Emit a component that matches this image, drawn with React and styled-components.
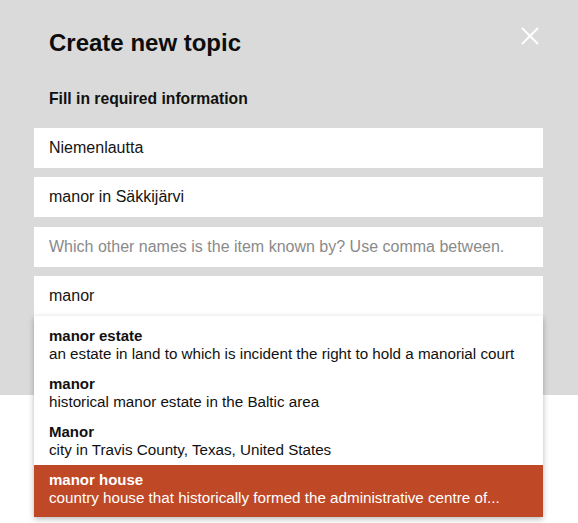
import React from "react";
import styled, { createGlobalStyle } from "styled-components";

const Global = createGlobalStyle`
  html, body { margin: 0; padding: 0; background: #ffffff; }
  body { font-family: "Liberation Sans", Arial, sans-serif; color: #111; }
  * { box-sizing: border-box; }
`;

const Page = styled.main`
  min-height: 100vh;
  background: #fff;
`;

const Panel = styled.section`
  background: #dadada;
  padding: 29px 35px 79px 34px;
  display: flex;
  flex-direction: column;
`;

const Header = styled.header`
  display: flex;
  justify-content: space-between;
  align-items: flex-start;
  padding-left: 15px;
`;

const Title = styled.h1`
  margin: 0;
  font-size: 24px;
  line-height: 28px;
  font-weight: 700;
  color: #0d0d0d;
`;

const Close = styled.button`
  border: 0;
  background: none;
  padding: 0;
  margin: -2px 4px 0 0;
  width: 18px;
  height: 18px;
  display: flex;
  cursor: pointer;
`;

const Subtitle = styled.h2`
  margin: 33px 0 20px;
  padding-left: 15px;
  font-size: 15.7px;
  line-height: 18px;
  font-weight: 700;
  color: #111;
`;

const Fields = styled.div`
  display: flex;
  flex-direction: column;
  gap: 9px;
`;

const Field = styled.div`
  position: relative;
  margin-top: ${(p) => (p.$extra ? "1px" : "0")};
`;

const Input = styled.input`
  display: block;
  width: 100%;
  height: 40px;
  border: 0;
  outline: none;
  background: #fff;
  padding: 0 15px;
  font-family: "Liberation Sans", Arial, sans-serif;
  font-size: 16px;
  color: #141414;
  &::placeholder { color: #8a8a8a; opacity: 1; }
`;

const Menu = styled.ul`
  position: absolute;
  top: 100%;
  left: 0;
  right: 0;
  margin: 0;
  padding: 5px 0 0;
  list-style: none;
  background: #fff;
  box-shadow: 0 2px 6px rgba(0, 0, 0, 0.28);
  z-index: 5;
`;

const Item = styled.li`
  padding: 6px 15px ${(p) => (p.$last ? "10px" : "6px")};
  background: ${(p) => (p.$active ? "#bf4826" : "transparent")};
  color: ${(p) => (p.$active ? "#fff" : "#111")};
  font-size: 15.2px;
  line-height: 18px;
  white-space: nowrap;
  overflow: hidden;
`;

const ItemTitle = styled.div`
  font-weight: 700;
  font-size: 15px;
`;

const ItemDesc = styled.div`
  overflow: hidden;
  text-overflow: ellipsis;
`;

const items = [
  { t: "manor estate", d: "an estate in land to which is incident the right to hold a manorial court" },
  { t: "manor", d: "historical manor estate in the Baltic area" },
  { t: "Manor", d: "city in Travis County, Texas, United States" },
  { t: "manor house", d: "country house that historically formed the administrative centre of..." },
];

export default function App() {
  return (
    <Page>
      <Global />
      <Panel>
        <Header>
          <Title>Create new topic</Title>
          <Close aria-label="Close">
            <svg width="18" height="18" viewBox="0 0 18 18">
              <path d="M1 1 L17 17 M17 1 L1 17" stroke="#fff" strokeWidth="2" strokeLinecap="butt" fill="none" />
            </svg>
          </Close>
        </Header>
        <Subtitle>Fill in required information</Subtitle>
        <Fields>
          <Field><Input readOnly defaultValue="Niemenlautta" /></Field>
          <Field><Input readOnly defaultValue="manor in Säkkijärvi" /></Field>
          <Field $extra><Input readOnly placeholder="Which other names is the item known by? Use comma between." /></Field>
          <Field>
            <Input readOnly defaultValue="manor" />
            <Menu>
              {items.map((it, i) => (
                <Item key={i} $active={i === 3} $last={i === items.length - 1}>
                  <ItemTitle>{it.t}</ItemTitle>
                  <ItemDesc>{it.d}</ItemDesc>
                </Item>
              ))}
            </Menu>
          </Field>
        </Fields>
      </Panel>
    </Page>
  );
}
